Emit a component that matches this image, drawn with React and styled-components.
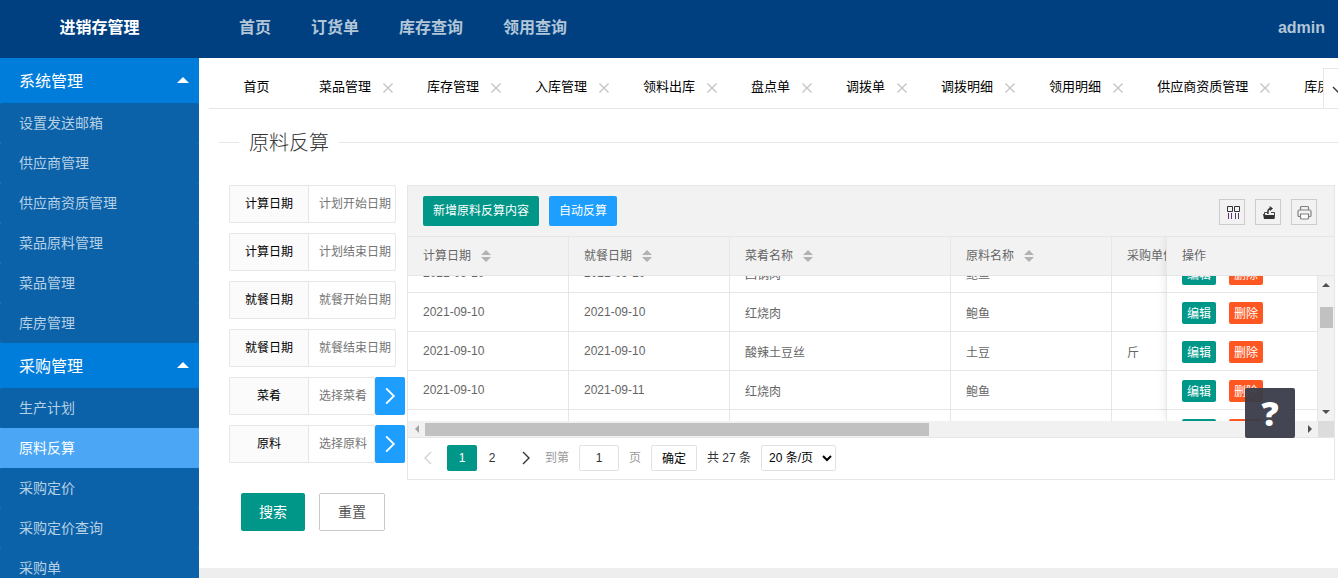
import React, { useEffect, useRef } from 'react'
import styled, { createGlobalStyle } from 'styled-components';

const menus = [
  { title: '系统管理', items: ['设置发送邮箱', '供应商管理', '供应商资质管理', '菜品原料管理', '菜品管理', '库房管理'] },
  { title: '采购管理', items: ['生产计划', '原料反算', '采购定价', '采购定价查询', '采购单'] },
];

const topLinks = ['首页', '订货单', '库存查询', '领用查询'];

const tabs = ['菜品管理', '库存管理', '入库管理', '领料出库', '盘点单', '调拨单', '调拨明细', '领用明细', '供应商资质管理', '库房管理'];

const filters = [
  { id: 'calcStart', label: '计算日期', placeholder: '计划开始日期' },
  { id: 'calcEnd', label: '计算日期', placeholder: '计划结束日期' },
  { id: 'mealStart', label: '就餐日期', placeholder: '就餐开始日期' },
  { id: 'mealEnd', label: '就餐日期', placeholder: '就餐结束日期' },
  { id: 'dish', label: '菜肴', placeholder: '选择菜肴', picker: true },
  { id: 'material', label: '原料', placeholder: '选择原料', picker: true },
];

const columns = [
  { title: '计算日期', width: 161, sort: true },
  { title: '就餐日期', width: 161, sort: true },
  { title: '菜肴名称', width: 221, sort: true },
  { title: '原料名称', width: 161, sort: true },
  { title: '采购单位', width: 161 },
];

const rows = [
  ['2021-09-10', '2021-09-10', '回锅肉', '鲍鱼', ''],
  ['2021-09-10', '2021-09-10', '红烧肉', '鲍鱼', ''],
  ['2021-09-10', '2021-09-10', '酸辣土豆丝', '土豆', '斤'],
  ['2021-09-10', '2021-09-11', '红烧肉', '鲍鱼', ''],
  ['2021-09-10', '2021-09-11', '酸辣土豆丝', '土豆', '斤'],
];

const SCROLL_TOP = 22;

function Cols() {
  return (
    <colgroup>
      {columns.map((col) => <col key={col.title} style={{ width: col.width }} />)}
    </colgroup>
  )
}

function Chevron({ dir, size = 14 }) {
  const d = { left: 'M10 1 4 7l6 6', right: 'M4 1l6 6-6 6', down: 'M1 4l6 6 6-6' }[dir];
  return (
    <svg width={size} height={size} viewBox="0 0 14 14" fill="none" stroke="currentColor" strokeWidth="1.4" aria-hidden="true">
      <path d={d} />
    </svg>
  )
}

function Arrow({ dir }) {
  const points = { up: '4,2 8,6 0,6', down: '0,2 8,2 4,6', left: '6,0 6,8 2,4', right: '2,0 6,4 2,8' }[dir];
  return (
    <svg width="8" height="8" viewBox="0 0 8 8" fill="currentColor" aria-hidden="true">
      <polygon points={points} />
    </svg>
  )
}

function DataTable() {
  const bodyRef = useRef(null);
  const fixedRef = useRef(null);

  useEffect(() => {
    bodyRef.current.scrollTop = SCROLL_TOP;
    fixedRef.current.scrollTop = SCROLL_TOP;
  }, []);

  return (
    <Panel>
      <Toolbar>
        <Button $small>新增原料反算内容</Button>
        <Button $small $color="#1e9fff">自动反算</Button>
        <Tools>
          <Tool aria-label="筛选列">
            <svg width="16" height="16" viewBox="0 0 16 16" fill="none" stroke="#333" aria-hidden="true">
              <path d="M3.5 2.5h5v5h-5zM10.5 2.5h5v5h-5z" />
              <path d="M4.5 9v6M7.500 9v6M11.500 9v6M14.500 9v6" stroke="#5a3d66" />
            </svg>
          </Tool>
          <Tool aria-label="导出">
            <svg width="16" height="16" viewBox="0 0 16 16" aria-hidden="true">
              <path d="M3 10h1.500l1 1H15l-.5 4H4z" fill="#333" />
              <path d="M4.500 10.500V8.500h3M11 8.500h3.500V11" fill="none" stroke="#444" />
              <path d="M8 10C7.500 7 8 5 10.500 4.500" fill="none" stroke="#333" strokeWidth="1.500" />
              <path d="M9.500 2l3.500 2.500L10 7z" fill="#333" />
            </svg>
          </Tool>
          <Tool aria-label="打印">
            <svg width="16" height="16" viewBox="0 0 16 16" fill="none" stroke="#808080" strokeWidth="1.2" aria-hidden="true">
              <path d="M4.500 6V3.500a1 1 0 0 1 1-1h6a1 1 0 0 1 1 1V6M4.500 12.500H3a1 1 0 0 1-1-1V7.500A1.500 1.500 0 0 1 3.500 6h10A1.500 1.500 0 0 1 15 7.500v4a1 1 0 0 1-1 1h-1.500" />
              <path d="M4.500 10h8v4a1 1 0 0 1-1 1h-6a1 1 0 0 1-1-1z" fill="#fff" />
            </svg>
          </Tool>
        </Tools>
      </Toolbar>
      <Split>
        <Scrollable>
          <Table>
            <Cols />
            <thead>
              <tr>
                {columns.map((col) => (
                  <th key={col.title}>
                    <HeadCell>
                      <span>{col.title}</span>
                      {col.sort && (
                        <svg width="10" height="12" viewBox="0 0 10 12" fill="#b2b2b2" aria-hidden="true">
                          <path d="M5 0l5 5H0zM0 7h10l-5 5z" />
                        </svg>
                      )}
                    </HeadCell>
                  </th>
                ))}
              </tr>
            </thead>
          </Table>
          <Body ref={bodyRef}>
            <Table>
              <Cols />
              <tbody>
                {rows.map((row, i) => (
                  <tr key={i}>
                    {row.map((cell, j) => <td key={j}>{cell}</td>)}
                  </tr>
                ))}
              </tbody>
            </Table>
          </Body>
        </Scrollable>
        <Fixed>
          <Table>
            <thead>
              <tr><th><HeadCell><span>操作</span></HeadCell></th></tr>
            </thead>
          </Table>
          <FixedBody>
            <Body ref={fixedRef}>
              <Table>
                <tbody>
                  {rows.map((row, i) => (
                    <tr key={i}>
                      <td>
                        <Actions>
                          <Button $mini>编辑</Button>
                          <Button $mini $color="#ff5722">删除</Button>
                        </Actions>
                      </td>
                    </tr>
                  ))}
                </tbody>
              </Table>
            </Body>
            <VScroll>
              <Arrow dir="up" />
              <VThumb />
              <Arrow dir="down" />
            </VScroll>
          </FixedBody>
        </Fixed>
      </Split>
      <HScroll>
        <HTrack>
          <Faded><Arrow dir="left" /></Faded>
          <ThumbLane><HThumb /></ThumbLane>
          <Arrow dir="right" />
        </HTrack>
        <Corner />
      </HScroll>
      <Pager>
        <PageStep disabled aria-label="上一页"><Chevron dir="left" /></PageStep>
        <PageNumber $current>1</PageNumber>
        <PageNumber>2</PageNumber>
        <PageStep aria-label="下一页"><Chevron dir="right" /></PageStep>
        <PageTools>
          <Muted htmlFor="page">到第</Muted>
          <PageInput id="page" defaultValue="1" />
          <Muted htmlFor="page">页</Muted>
          <GoButton>确定</GoButton>
          <Total>共 27 条</Total>
          <PageSize aria-label="每页条数" defaultValue="20">
            <option value="20">20 条/页</option>
          </PageSize>
        </PageTools>
      </Pager>
    </Panel>
  )
}

function App() {
  return (
    <Page>
      <GlobalStyle />
      <Header>
        <Logo>进销存管理</Logo>
        <TopNav>
          {topLinks.map((link) => <a key={link} href="#">{link}</a>)}
        </TopNav>
        <User href="#">admin</User>
      </Header>
      <Main>
        <Sidebar>
          {menus.map((menu) => (
            <div key={menu.title}>
              <MenuTitle href="#">{menu.title}</MenuTitle>
              {menu.items.map((item) => (
                <MenuItem key={item} href="#" $active={item === '原料反算'}>{item}</MenuItem>
              ))}
            </div>
          ))}
        </Sidebar>
        <Content>
          <TabBar>
            <TabList>
              <HomeTab>首页</HomeTab>
              {tabs.map((tab) => (
                <Tab key={tab}>
                  {tab}
                  <Close aria-label="关闭">
                    <svg width="10" height="10" viewBox="0 0 10 10" stroke="currentColor" strokeWidth="1.2" aria-hidden="true">
                      <path d="M0.500 0.500l9 9M9.500 0.500l-9 9" />
                    </svg>
                  </Close>
                </Tab>
              ))}
            </TabList>
            <TabMore aria-label="更多"><Chevron dir="down" /></TabMore>
          </TabBar>
          <Title><legend>原料反算</legend></Title>
          <Workspace>
            <Filters>
              {filters.map((f) => (
                <Field key={f.id}>
                  <label htmlFor={f.id}>{f.label}</label>
                  <input id={f.id} placeholder={f.placeholder} />
                  {f.picker && <Pick type="button" aria-label={f.placeholder}><Chevron dir="right" size={18} /></Pick>}
                </Field>
              ))}
              <FormButtons>
                <Button type="button">搜索</Button>
                <Button type="button" $plain>重置</Button>
              </FormButtons>
            </Filters>
            <DataTable />
          </Workspace>
        </Content>
      </Main>
      <Help aria-label="帮助">?</Help>
    </Page>
  )
}

const GlobalStyle = createGlobalStyle`
 *{
  box-sizing: border-box;
 }
 body{
  margin: 0;
  overflow: hidden;
 }
 body, button, input, select{
  font-family: "Liberation Sans", "Noto Sans CJK SC", sans-serif;
 }
 a{
  text-decoration: none;
 }
 button{
  padding: 0;
  cursor: pointer;
 }
`;

const Page = styled.div`
 height: 100vh;
 display: flex;
 flex-direction: column;
 font-size: 14px;
`;

const Header = styled.header`
 flex: 0 0 58px;
 padding-bottom: 6px;
 display: flex;
 align-items: center;
 background: #004080;
 font-size: 16px;
 font-weight: 700;
`;

const Logo = styled.div`
 width: 199px;
 text-align: center;
 color: #fff;
`;

const TopNav = styled.nav`
 flex: 1;
 display: flex;
 gap: 40px;
 padding-left: 40px;
 a{
  color: #b2c6d8;
 }
`;

const User = styled.a`
 padding: 4px 13px 0 0;
 color: #b2c6d8;
`;

const Main = styled.div`
 flex: 1;
 min-height: 0;
 display: flex;
`;

const Sidebar = styled.nav`
 flex: 0 0 199px;
 overflow: hidden;
 background: #007ddb;
`;

const MenuTitle = styled.a`
 display: flex;
 align-items: center;
 justify-content: space-between;
 height: 45px;
 padding: 0 10px 2px 19px;
 font-size: 16px;
 color: #fff;
 &::after{
  content: '';
  border: 6px solid transparent;
  border-top: 0;
  border-bottom-color: #fff;
 }
`;

const MenuItem = styled.a`
 display: block;
 padding-left: 19px;
 line-height: 40px;
 border-radius: ${(p) => (p.$active ? 0 : 2)}px;
 background: ${(p) => (p.$active ? '#4ba7f6' : '#0c62a8')};
 color: ${(p) => (p.$active ? '#fff' : '#b6d0e5')};
`;

const Content = styled.main`
 flex: 1;
 min-width: 0;
 padding-top: 10px;
 background: #fff;
 border-bottom: 10px solid #eee;
`;

const TabBar = styled.div`
 display: flex;
 margin-left: 10px;
 height: 41px;
 border-bottom: 1px solid #e6e6e6;
`;

const TabList = styled.ul`
 flex: 1;
 min-width: 0;
 margin: 0;
 padding: 0;
 display: flex;
 overflow: hidden;
 list-style: none;
 font-size: 13px;
 color: #000;
`;

const Tab = styled.li`
 flex: none;
 display: flex;
 align-items: center;
 padding: 0 15px 5px;
`;

const HomeTab = styled(Tab)`
 width: 95px;
 justify-content: center;
`;

const Close = styled.button`
 width: 18px;
 height: 18px;
 margin: 4px 0 0 8px;
 display: flex;
 align-items: center;
 justify-content: center;
 border: 0;
 background: none;
 color: #c2c2c2;
`;

const TabMore = styled.button`
 flex: 0 0 15px;
 padding: 2px 0 0 8px;
 display: flex;
 align-items: center;
 overflow: hidden;
 border: 1px solid #e6e6e6;
 border-width: 1px 0 0 1px;
 background: #fff;
 color: #333;
 svg{
  flex: none;
 }
`;

const Title = styled.fieldset`
 margin: 18px 0 28px 20px;
 padding: 0;
 border: 0;
 border-top: 1px solid #e6e6e6;
 legend{
  margin-left: 20px;
  padding: 2px 10px 0;
  font-size: 20px;
  line-height: 28px;
  font-weight: 300;
  color: #333;
 }
`;

const Workspace = styled.div`
 display: flex;
 align-items: flex-start;
 padding: 0 3px 0 30px;
`;

const Filters = styled.form`
 flex: 0 0 178px;
 display: flex;
 flex-direction: column;
 gap: 10px;
`;

const Field = styled.div`
 display: flex;
 height: 38px;
 width: 176px;
 font-size: 12px;
 label{
  flex: 0 0 80px;
  line-height: 36px;
  text-align: center;
  border: 1px solid #e6e6e6;
  border-radius: 2px 0 0 2px;
  background: #fbfbfb;
  color: #000;
 }
 input{
  flex: 1;
  min-width: 0;
  margin: 0 9px 0 -1px;
  padding: 0 0 0 10px;
  border: 1px solid #e6e6e6;
  border-radius: 2px;
  font-size: 12px;
 }
 input:not(:last-child){
  margin-right: 0;
 }
 input::placeholder{
  color: #757575;
 }
`;

const Pick = styled.button`
 flex: 0 0 30px;
 display: flex;
 align-items: center;
 justify-content: center;
 border: 0;
 border-radius: 2px;
 background: #1e9fff;
 color: #fff;
`;

const FormButtons = styled.div`
 display: flex;
 gap: 14px;
 padding: 20px 0 0 12px;
`;

const Button = styled.button`
 flex: none;
 height: ${(p) => (p.$mini ? 22 : p.$small ? 30 : 38)}px;
 padding: 0 ${(p) => (p.$mini ? 5 : p.$small ? 10 : 18)}px ${(p) => (p.$small ? 4 : 2)}px;
 font-size: ${(p) => (p.$mini || p.$small ? 12 : 14)}px;
 border: ${(p) => (p.$plain ? '1px solid #c9c9c9' : '0')};
 border-radius: 2px;
 background: ${(p) => (p.$plain ? '#fff' : p.$color || '#009688')};
 color: ${(p) => (p.$plain ? '#555' : '#fff')};
`;

const Panel = styled.section`
 flex: 1;
 min-width: 0;
 border: 1px solid #e6e6e6;
 font-size: 12px;
 color: #666;
`;

const Toolbar = styled.div`
 display: flex;
 align-items: center;
 gap: 10px;
 height: 51px;
 padding: 0 17px 0 15px;
 background: #f2f2f2;
 border-bottom: 1px solid #e6e6e6;
`;

const Tools = styled.div`
 display: flex;
 gap: 10px;
 margin-left: auto;
 padding-top: 2px;
`;

const Tool = styled.button`
 width: 26px;
 height: 26px;
 display: flex;
 align-items: center;
 justify-content: center;
 border: 1px solid #ccc;
 background: none;
`;

const Split = styled.div`
 display: flex;
`;

const Scrollable = styled.div`
 flex: 1;
 min-width: 0;
 overflow: hidden;
`;

const Table = styled.table`
 width: 100%;
 table-layout: fixed;
 border-collapse: separate;
 border-spacing: 0;
 th, td{
  height: 39px;
  padding: 0 0 0 15px;
  border: 1px solid #e6e6e6;
  border-width: 0 1px 1px 0;
  text-align: left;
  font-weight: 400;
  white-space: nowrap;
 }
 th{
  background: #f2f2f2;
 }
`;

const HeadCell = styled.div`
 display: flex;
 align-items: center;
 gap: 10px;
 span{
  padding-bottom: 3px;
 }
`;

const Body = styled.div`
 flex: 1;
 height: 145px;
 overflow: hidden;
`;

const Fixed = styled.div`
 flex: 0 0 168px;
 border-left: 1px solid #e6e6e6;
 background: #fff;
 box-shadow: -1px 0 8px rgba(0, 0, 0, 0.08);
 clip-path: inset(0 0 0 -12px);
 th{
  border-right: 0;
 }
`;

const FixedBody = styled.div`
 display: flex;
`;

const Actions = styled.div`
 display: flex;
 gap: 13px;
 padding-top: 2px;
`;

const VScroll = styled.div`
 flex: 0 0 16px;
 padding: 5px 0;
 display: flex;
 flex-direction: column;
 align-items: center;
 background: #f1f1f1;
 color: #505050;
 svg:last-child{
  margin-top: auto;
 }
`;

const VThumb = styled.div`
 width: 13px;
 height: 21px;
 margin-top: 18px;
 background: #c1c1c1;
`;

const HScroll = styled.div`
 display: flex;
 height: 17px;
 border-bottom: 1px solid #e6e6e6;
`;

const HTrack = styled.div`
 flex: 1;
 display: flex;
 align-items: center;
 padding: 0 4px 0 5px;
 background: #f1f1f1;
 color: #505050;
`;

const Faded = styled.span`
 display: flex;
 color: #a3a3a3;
`;

const ThumbLane = styled.div`
 flex: 1;
 margin: 0 4px;
`;

const HThumb = styled.div`
 width: 57.5%;
 height: 13px;
 background: #c1c1c1;
`;

const Corner = styled.div`
 flex: 0 0 16px;
 background: #dcdcdc;
`;

const Pager = styled.div`
 display: flex;
 padding: 7px 0 8px 1px;
 color: #333;
`;

const PageStep = styled.button`
 width: 38px;
 height: 26px;
 display: flex;
 align-items: center;
 justify-content: center;
 border: 0;
 background: none;
 color: #333;
 &:disabled{
  color: #d2d2d2;
 }
`;

const PageNumber = styled.button`
 width: 30px;
 height: 26px;
 border: 0;
 border-radius: 2px;
 font-size: 12px;
 background: ${(p) => (p.$current ? '#009688' : 'none')};
 color: ${(p) => (p.$current ? '#fff' : '#333')};
`;

const PageTools = styled.div`
 display: flex;
 align-items: center;
 gap: 10px;
`;

const Muted = styled.label`
 padding-bottom: 3px;
 color: #999;
`;

const Total = styled.span`
 padding-bottom: 3px;
`;

const PageInput = styled.input`
 width: 40px;
 height: 26px;
 border: 1px solid #e2e2e2;
 border-radius: 2px;
 text-align: center;
 font-size: 12px;
 color: #333;
`;

const GoButton = styled.button`
 width: 46px;
 height: 26px;
 padding-bottom: 2px;
 border: 1px solid #e2e2e2;
 border-radius: 2px;
 background: #fff;
 font-size: 12px;
 color: #000;
`;

const PageSize = styled.select`
 width: 75px;
 height: 26px;
 padding: 0 3px;
 border: 1px solid #e2e2e2;
 border-radius: 2px;
 background: #fff;
 font-size: 12px;
 color: #000;
`;

const Help = styled.button`
 position: fixed;
 right: 43px;
 bottom: 140px;
 width: 50px;
 height: 50px;
 border: 0;
 border-radius: 2px;
 background: #393d49;
 opacity: 0.95;
 font-family: "Open Sans", sans-serif;
 font-size: 34px;
 line-height: 48px;
 font-weight: 800;
 color: #fff;
`;

export default App
